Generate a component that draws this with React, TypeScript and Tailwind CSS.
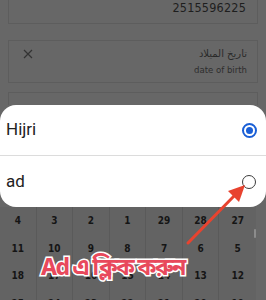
const rows = [
  ["4", "3", "2", "1", "29", "28", "27"],
  ["11", "10", "9", "8", "7", "6", "5"],
  ["18", "17", "16", "15", "14", "13", "12"],
  ["25", "24", "23", "22", "21", "20", "19"],
];

const App = () => {
  return (
    <div className="relative w-[266px] h-[300px] overflow-hidden bg-[#676767] font-['Roboto',sans-serif]">
      {/* fields behind the sheet */}
      <div className="px-2">
        <div className="h-[24px] border border-t-0 border-[#5d5d5d] flex items-start justify-end pr-[11px]">
          <span className="text-[12.5px] leading-[16px] text-[#1e1e1e] font-['DejaVu_Sans_Condensed','DejaVu_Sans',sans-serif] tracking-[0.2px]">
            2515596225
          </span>
        </div>
        <div className="mt-[16px] h-[43px] border border-[#5d5d5d] flex items-start justify-between pl-[13px] pr-[10px] pt-[6px]">
          <svg width="12" height="12" viewBox="0 0 12 12" className="mt-[1px]">
            <path d="M2 2 L10 10 M10 2 L2 10" stroke="#333" strokeWidth="1.2" />
          </svg>
          <div className="flex flex-col items-end">
            <span className="text-[10px] leading-[14px] text-[#2a2a2a] font-['DejaVu_Sans',sans-serif]">
              تاريخ الميلاد
            </span>
            <span className="mt-[3px] text-[9.5px] leading-[12px] text-[#2e2e2e] font-['DejaVu_Sans_Condensed','DejaVu_Sans',sans-serif]">
              date of birth
            </span>
          </div>
        </div>
        <div className="mt-[9px] h-[13px] border border-b-0 border-[#5d5d5d]" />
      </div>

      {/* choice sheet */}
      <div className="bg-white rounded-[16px] overflow-hidden">
        <div className="h-[51px] flex items-center justify-between pl-[6px] pr-[9px] border-b border-[#dcdcdc]">
          <span className="text-[17px] text-[#222]">Hijri</span>
          <span className="w-[15px] h-[15px] rounded-full border-[2px] border-[#1a5fd6] flex items-center justify-center">
            <span className="w-[7px] h-[7px] rounded-full bg-[#1a5fd6]" />
          </span>
        </div>
        <div className="h-[51px] flex items-center justify-between pl-[6px] pr-[10px]">
          <span className="text-[17px] text-[#222]">ad</span>
          <span className="w-[14px] h-[14px] rounded-full border-[1.5px] border-[#3c3c3c]" />
        </div>
      </div>

      {/* calendar behind */}
      <div className="w-[256px] grid grid-cols-7 bg-[#636363]">
        {rows.map((r, i) =>
          r.map((d, j) => (
            <div
              key={`${i}-${j}`}
              className={`h-[27.5px] flex items-center justify-center text-[10px] font-bold text-[#151515] font-['DejaVu_Sans_Condensed','DejaVu_Sans',sans-serif] ${
                j < 6 ? "border-r border-[#5a5a5a]" : ""
              }`}
            >
              {d}
            </div>
          ))
        )}
      </div>

      {/* scrollbar */}
      <div className="absolute left-[254px] top-[229px] w-[2px] h-[9px] bg-[#8c8c8c] rounded-full" />

      {/* annotation arrow */}
      <svg className="absolute left-0 top-0" width="266" height="300" viewBox="0 0 266 300">
        <line x1="188" y1="243" x2="236" y2="194" stroke="#e8432f" strokeWidth="3" strokeLinecap="round" />
        <polygon points="245,185 239,202 228,191" fill="#e8432f" />
      </svg>

      {/* annotation text */}
      <div className="absolute left-[41px] top-[255px] text-[23px] leading-[28px] tracking-[-1.6px] font-bold text-[#e8495c] [-webkit-text-stroke:3px_white] [paint-order:stroke_fill] font-['Noto_Sans_Bengali','Noto_Sans',sans-serif] whitespace-nowrap">
        Ad এ ক্লিক করুন
      </div>
    </div>
  );
};

export default App;
